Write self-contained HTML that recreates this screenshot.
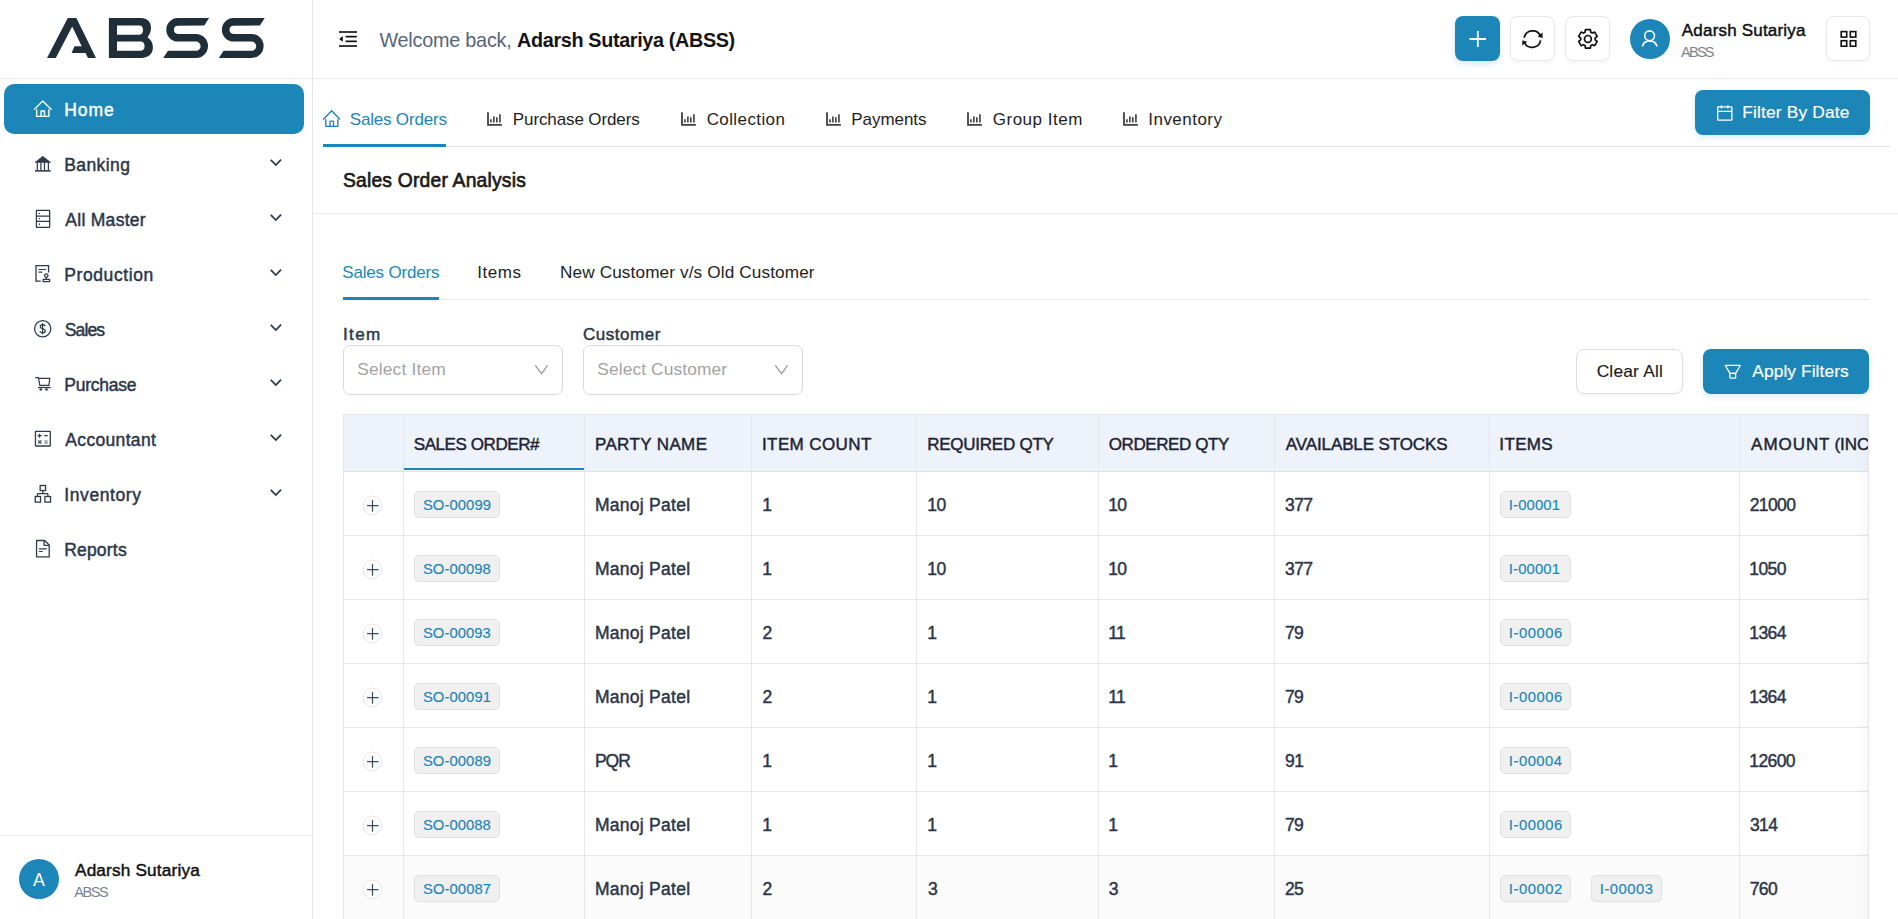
<!DOCTYPE html>
<html><head><meta charset="utf-8"><title>ABSS</title>
<style>
html,body{margin:0;padding:0;width:1898px;height:919px;overflow:hidden;background:#fff;}
body{position:relative;font-family:"Liberation Sans",sans-serif;}
.a{position:absolute;}
.t{position:absolute;line-height:1;white-space:nowrap;}
svg.a{overflow:visible;}
</style></head><body>
<div class="a" style="left:312px;top:0px;width:1px;height:919px;background:#e4e6ec"></div>
<div class="a" style="left:0px;top:78px;width:312px;height:1px;background:#e6e8ee"></div>
<svg class="a" style="left:0;top:0" width="312" height="78" viewBox="0 0 312 78">
<g fill="#1f2e38">
<path d="M47,57.9 L67.8,18.1 L76.4,18.1 L96,57.9 L88,57.9 L85.5,52.9 L71.6,52.9 L74.5,46.2 L81.7,46.2 L72.2,26.6 L55.8,57.9 Z"/>
<path fill-rule="evenodd" d="M108.9,18.1 L141,18.1 C147.5,18.1 151,22.5 151,27.5 C151,31.5 149.5,35 147.5,37.2 C151,39.5 152.9,43 152.9,47.5 C152.9,53.5 148.5,57.9 141.5,57.9 L108.9,57.9 Z M117,25.5 L139.5,25.5 C142,25.5 143,27.5 143,30.1 C143,32.6 142,34.7 139.5,34.7 L117,34.7 Z M117,41.6 L140.5,41.6 C143,41.6 144.6,43.5 144.6,46.2 C144.6,49 143,50.8 140.5,50.8 L117,50.8 Z"/>
<path d="M209.1,18.1 L178,18.1 A11.75,11.75 0 0 0 178,41.6 L196,41.6 A4.6,4.6 0 0 1 196,50.8 L168,50.8 L163.2,57.9 L196,57.9 A12,12 0 0 0 196,33.9 L178,33.9 A4.05,4.05 0 0 1 178,25.8 L204.3,25.5 Z"/>
<path transform="translate(55.6,0)" d="M209.1,18.1 L178,18.1 A11.75,11.75 0 0 0 178,41.6 L196,41.6 A4.6,4.6 0 0 1 196,50.8 L168,50.8 L163.2,57.9 L196,57.9 A12,12 0 0 0 196,33.9 L178,33.9 A4.05,4.05 0 0 1 178,25.8 L204.3,25.5 Z"/>
</g></svg>
<div class="a" style="left:4px;top:84px;width:300px;height:50px;background:#1b86b7;border-radius:10px"></div>
<svg class="a" style="left:28px;top:95px" width="30" height="30" viewBox="0 0 919 919"><g fill="none" stroke="#fff" stroke-width="42" stroke-linejoin="round" stroke-linecap="round"><path d="M195,440 L450,185 L710,440"/><path d="M265,450 L265,655 L640,655 L640,450"/><path d="M400,655 L400,490 L505,490 L505,655"/></g></svg>
<span class="t" style="left:64.20px;top:101.99px;font-size:17.5px;color:#fff;font-weight:400;letter-spacing:0.950px;-webkit-text-stroke:0.45px #fff;">Home</span>
<svg class="a" style="left:28px;top:150px" width="30" height="30" viewBox="0 0 919 919"><g fill="#2f3b4d" stroke="#2f3b4d"><path d="M215,380 L450,190 L695,380 Z" stroke-width="20" stroke-linejoin="round"/><g stroke-width="38" fill="none"><path d="M285,380 L285,620 M395,380 L395,620 M505,380 L505,620 M625,380 L625,620"/><path d="M215,640 L695,640" stroke-width="48"/></g></g></svg>
<span class="t" style="left:64.20px;top:156.99px;font-size:17.5px;color:#2b3648;font-weight:400;letter-spacing:0.429px;-webkit-text-stroke:0.45px #2b3648;">Banking</span>
<svg class="a" style="left:260px;top:150px" width="30" height="30" viewBox="0 0 919 919"><path d="M330,305 L485,460 L645,295" fill="none" stroke="#2f3b4d" stroke-width="55"/></svg>
<svg class="a" style="left:28px;top:205px" width="30" height="30" viewBox="0 0 919 919"><g fill="none" stroke="#2f3b4d" stroke-width="40"><rect x="258" y="165" width="405" height="520" rx="18"/><path d="M258,340 L663,340 M258,500 L663,500"/></g><g fill="#2f3b4d"><circle cx="350" cy="260" r="22"/><circle cx="350" cy="420" r="22"/><rect x="332" y="560" width="36" height="50" rx="16"/></g></svg>
<span class="t" style="left:65.30px;top:211.99px;font-size:17.5px;color:#2b3648;font-weight:400;letter-spacing:0.285px;-webkit-text-stroke:0.45px #2b3648;">All Master</span>
<svg class="a" style="left:260px;top:205px" width="30" height="30" viewBox="0 0 919 919"><path d="M330,305 L485,460 L645,295" fill="none" stroke="#2f3b4d" stroke-width="55"/></svg>
<svg class="a" style="left:28px;top:260px" width="30" height="30" viewBox="0 0 919 919"><g fill="none" stroke="#2f3b4d" stroke-width="40"><path d="M390,650 L245,650 L245,175 L630,175 L630,380"/><path d="M320,290 L550,290 M320,370 L440,370" stroke-width="36"/><circle cx="560" cy="478" r="52"/><path d="M560,530 L560,590"/><rect x="462" y="595" width="200" height="68" rx="10"/></g></svg>
<span class="t" style="left:64.20px;top:266.99px;font-size:17.5px;color:#2b3648;font-weight:400;letter-spacing:0.599px;-webkit-text-stroke:0.45px #2b3648;">Production</span>
<svg class="a" style="left:260px;top:260px" width="30" height="30" viewBox="0 0 919 919"><path d="M330,305 L485,460 L645,295" fill="none" stroke="#2f3b4d" stroke-width="55"/></svg>
<svg class="a" style="left:28px;top:315px" width="30" height="30" viewBox="0 0 919 919"><g fill="none" stroke="#2f3b4d" stroke-width="40"><circle cx="450" cy="420" r="248"/><path d="M525,335 C505,305 478,298 447,298 C405,298 375,322 375,357 C375,400 420,410 450,420 C492,432 530,447 530,490 C530,525 495,545 450,545 C410,545 380,530 360,498" stroke-width="40"/><path d="M447,255 L447,590" stroke-width="36"/></g></svg>
<span class="t" style="left:64.81px;top:321.99px;font-size:17.5px;color:#2b3648;font-weight:400;letter-spacing:-0.863px;-webkit-text-stroke:0.45px #2b3648;">Sales</span>
<svg class="a" style="left:260px;top:315px" width="30" height="30" viewBox="0 0 919 919"><path d="M330,305 L485,460 L645,295" fill="none" stroke="#2f3b4d" stroke-width="55"/></svg>
<svg class="a" style="left:28px;top:370px" width="30" height="30" viewBox="0 0 919 919"><g fill="none" stroke="#2f3b4d" stroke-width="38" stroke-linejoin="round"><path d="M220,235 L318,235 L362,470 L640,470 L668,258 L330,258"/><path d="M308,537 L692,537" stroke-width="40"/></g><g fill="#2f3b4d"><circle cx="392" cy="598" r="40"/><circle cx="567" cy="598" r="40"/></g></svg>
<span class="t" style="left:64.20px;top:376.99px;font-size:17.5px;color:#2b3648;font-weight:400;letter-spacing:-0.221px;-webkit-text-stroke:0.45px #2b3648;">Purchase</span>
<svg class="a" style="left:260px;top:370px" width="30" height="30" viewBox="0 0 919 919"><path d="M330,305 L485,460 L645,295" fill="none" stroke="#2f3b4d" stroke-width="55"/></svg>
<svg class="a" style="left:28px;top:425px" width="30" height="30" viewBox="0 0 919 919"><g fill="none" stroke="#2f3b4d" stroke-width="40"><rect x="228" y="198" width="455" height="445" rx="12"/><path d="M290,325 L420,325 M352,268 L352,388 M500,325 L605,325" stroke-width="36"/><path d="M312,470 L412,572 M412,470 L312,572" stroke-width="34"/><path d="M500,490 L605,490 M500,548 L605,548" stroke-width="34" stroke="#6b7482"/></g></svg>
<span class="t" style="left:65.30px;top:431.99px;font-size:17.5px;color:#2b3648;font-weight:400;letter-spacing:0.332px;-webkit-text-stroke:0.45px #2b3648;">Accountant</span>
<svg class="a" style="left:260px;top:425px" width="30" height="30" viewBox="0 0 919 919"><path d="M330,305 L485,460 L645,295" fill="none" stroke="#2f3b4d" stroke-width="55"/></svg>
<svg class="a" style="left:28px;top:480px" width="30" height="30" viewBox="0 0 919 919"><g fill="none" stroke="#2f3b4d" stroke-width="40"><rect x="373" y="168" width="165" height="155"/><path d="M455,323 L455,415 M290,415 L608,415 M290,415 L290,505 M608,415 L608,505"/><rect x="222" y="505" width="162" height="172"/><rect x="518" y="505" width="172" height="172"/></g></svg>
<span class="t" style="left:64.32px;top:486.99px;font-size:17.5px;color:#2b3648;font-weight:400;letter-spacing:0.583px;-webkit-text-stroke:0.45px #2b3648;">Inventory</span>
<svg class="a" style="left:260px;top:480px" width="30" height="30" viewBox="0 0 919 919"><path d="M330,305 L485,460 L645,295" fill="none" stroke="#2f3b4d" stroke-width="55"/></svg>
<svg class="a" style="left:28px;top:535px" width="30" height="30" viewBox="0 0 919 919"><g fill="none" stroke="#2f3b4d" stroke-width="40" stroke-linejoin="round"><path d="M262,168 L508,168 L650,305 L650,668 L262,668 Z"/><path d="M492,172 L492,315 L645,315"/><path d="M335,425 L575,425 M335,505 L455,505" stroke-width="36"/></g></svg>
<span class="t" style="left:64.20px;top:541.99px;font-size:17.5px;color:#2b3648;font-weight:400;letter-spacing:0.194px;-webkit-text-stroke:0.45px #2b3648;">Reports</span>
<div class="a" style="left:0px;top:835px;width:312px;height:1px;background:#e6e8ee"></div>
<div class="a" style="left:19px;top:859px;width:40px;height:40px;background:#1b86b7;border-radius:50%"></div>
<span class="t" style="left:32.90px;top:871.53px;font-size:17.8px;color:#fff;font-weight:400;">A</span>
<span class="t" style="left:75.00px;top:862.04px;font-size:17.2px;color:#111;font-weight:400;letter-spacing:0.173px;-webkit-text-stroke:0.45px #111;">Adarsh Sutariya</span>
<span class="t" style="left:74.20px;top:884.93px;font-size:14.5px;color:#7b8594;font-weight:400;letter-spacing:-1.430px;">ABSS</span>
<div class="a" style="left:313px;top:78px;width:1585px;height:1px;background:#e6e8ee"></div>
<svg class="a" style="left:336px;top:28px" width="24" height="22" viewBox="0 0 24 22"><g fill="#3a3a3a"><rect x="3" y="3" width="18" height="2"/><rect x="3" y="17" width="18" height="2"/></g><g fill="#111"><rect x="9.6" y="7.8" width="11.2" height="1.7"/><rect x="9.6" y="12.5" width="11.2" height="1.7"/><path d="M3.1,10.9 L6.8,8.0 L6.8,13.8 Z"/></g></svg>
<span class="t" style="left:379.40px;top:30.64px;font-size:19.8px;color:#56657a;font-weight:400;letter-spacing:-0.205px;">Welcome back,</span>
<span class="t" style="left:517.11px;top:30.64px;font-size:19.8px;color:#141414;font-weight:700;letter-spacing:-0.345px;">Adarsh Sutariya (ABSS)</span>
<div class="a" style="left:1455px;top:16px;width:45px;height:45px;background:#1b86b7;border-radius:8px;box-shadow:0 3px 6px rgba(27,134,183,0.18)"></div>
<svg class="a" style="left:1455px;top:16px" width="45" height="45" viewBox="0 0 45 45"><path d="M14.5,23 L31,23 M22.8,15 L22.8,31" stroke="#fff" stroke-width="1.8"/></svg>
<div class="a" style="left:1510px;top:16px;width:44.5px;height:45px;background:#fff;border:1px solid #e8e8e8;box-sizing:border-box;border-radius:8px;box-shadow:0 2px 4px rgba(0,0,0,0.04)"></div>
<div class="a" style="left:1565px;top:16px;width:44.5px;height:45px;background:#fff;border:1px solid #e8e8e8;box-sizing:border-box;border-radius:8px;box-shadow:0 2px 4px rgba(0,0,0,0.04)"></div>
<div class="a" style="left:1825.5px;top:16px;width:44.5px;height:45px;background:#fff;border:1px solid #e8e8e8;box-sizing:border-box;border-radius:8px;box-shadow:0 2px 4px rgba(0,0,0,0.04)"></div>
<svg class="a" style="left:1510px;top:16px" width="44" height="45" viewBox="0 0 44 45"><g fill="none" stroke="#111" stroke-width="1.7"><path d="M30.6,20.2 A8.6,8.6 0 0 0 14.2,21.8"/><path d="M14.2,26.0 A8.6,8.6 0 0 0 30.6,24.4"/></g><path d="M32.5,16.6 L32.6,22 L27.6,20.6 Z M12.2,29.6 L12.4,24.2 L17.2,25.8 Z" fill="#111"/></svg>
<svg class="a" style="left:1565px;top:16px" width="44" height="45" viewBox="0 0 44 45"><g fill="none" stroke="#111" stroke-width="1.7" stroke-linejoin="round"><path d="M20.06,16.18 L20.43,13.62 L25.37,13.62 L25.74,16.18 L27.30,17.08 L29.70,16.12 L32.17,20.40 L30.14,22.00 L30.14,23.80 L32.17,25.40 L29.70,29.68 L27.30,28.72 L25.74,29.62 L25.37,32.18 L20.43,32.18 L20.06,29.62 L18.50,28.72 L16.10,29.68 L13.63,25.40 L15.66,23.80 L15.66,22.00 L13.63,20.40 L16.10,16.12 L18.50,17.08 Z"/><circle cx="22.9" cy="22.9" r="3.4"/></g></svg>
<div class="a" style="left:1630px;top:19px;width:40px;height:40px;background:#1b86b7;border-radius:50%"></div>
<svg class="a" style="left:1630px;top:19px" width="40" height="40" viewBox="0 0 40 40"><g fill="none" stroke="#fff" stroke-width="1.6"><circle cx="19.6" cy="16.8" r="4.9"/><path d="M12.3,27.5 A7.6,7.6 0 0 1 27,27.5"/></g></svg>
<span class="t" style="left:1681.80px;top:22.41px;font-size:17px;color:#111;font-weight:400;letter-spacing:0.196px;-webkit-text-stroke:0.45px #111;">Adarsh Sutariya</span>
<span class="t" style="left:1681.00px;top:45.03px;font-size:14.5px;color:#7b8594;font-weight:400;letter-spacing:-1.730px;">ABSS</span>
<svg class="a" style="left:1825.5px;top:16px" width="44" height="45" viewBox="0 0 44 45"><g fill="none" stroke="#111" stroke-width="1.6"><rect x="15.2" y="15.6" width="5.5" height="5.5"/><rect x="24.3" y="15.6" width="5.5" height="5.5"/><rect x="15.2" y="24.7" width="5.5" height="5.5"/><rect x="24.3" y="24.7" width="5.5" height="5.5"/></g></svg>
<div class="a" style="left:323px;top:146px;width:1567px;height:1px;background:#e3e5ea"></div>
<div class="a" style="left:323px;top:144px;width:123px;height:3px;background:#1b86b7"></div>
<svg class="a" style="left:315px;top:103px" width="30" height="30" viewBox="0 0 919 919"><g fill="none" stroke="#1b86b7" stroke-width="42" stroke-linejoin="round" stroke-linecap="round"><path d="M260,500 L510,240 L755,490"/><path d="M330,510 L330,715 L700,715 L700,510"/><path d="M460,715 L460,555 L565,555 L565,715"/></g></svg>
<span class="t" style="left:349.74px;top:110.61px;font-size:17px;color:#1b86b7;font-weight:400;letter-spacing:-0.185px;">Sales Orders</span>
<svg class="a" style="left:480px;top:103px" width="30" height="30" viewBox="0 0 919 919"><g fill="none" stroke="#404040"><path d="M245,285 L245,670 L670,670" stroke-width="55"/><path d="M335,500 L335,600 M425,410 L425,600 M515,440 L515,600 M610,345 L610,600" stroke-width="50"/></g></svg>
<span class="t" style="left:512.84px;top:110.61px;font-size:17px;color:#1e1e1e;font-weight:400;letter-spacing:-0.112px;">Purchase Orders</span>
<svg class="a" style="left:674px;top:103px" width="30" height="30" viewBox="0 0 919 919"><g fill="none" stroke="#404040"><path d="M245,285 L245,670 L670,670" stroke-width="55"/><path d="M335,500 L335,600 M425,410 L425,600 M515,440 L515,600 M610,345 L610,600" stroke-width="50"/></g></svg>
<span class="t" style="left:706.65px;top:110.61px;font-size:17px;color:#1e1e1e;font-weight:400;letter-spacing:0.403px;">Collection</span>
<svg class="a" style="left:818.6px;top:103px" width="30" height="30" viewBox="0 0 919 919"><g fill="none" stroke="#404040"><path d="M245,285 L245,670 L670,670" stroke-width="55"/><path d="M335,500 L335,600 M425,410 L425,600 M515,440 L515,600 M610,345 L610,600" stroke-width="50"/></g></svg>
<span class="t" style="left:851.34px;top:110.61px;font-size:17px;color:#1e1e1e;font-weight:400;letter-spacing:-0.059px;">Payments</span>
<svg class="a" style="left:959.8px;top:103px" width="30" height="30" viewBox="0 0 919 919"><g fill="none" stroke="#404040"><path d="M245,285 L245,670 L670,670" stroke-width="55"/><path d="M335,500 L335,600 M425,410 L425,600 M515,440 L515,600 M610,345 L610,600" stroke-width="50"/></g></svg>
<span class="t" style="left:992.75px;top:110.61px;font-size:17px;color:#1e1e1e;font-weight:400;letter-spacing:0.508px;">Group Item</span>
<svg class="a" style="left:1116px;top:103px" width="30" height="30" viewBox="0 0 919 919"><g fill="none" stroke="#404040"><path d="M245,285 L245,670 L670,670" stroke-width="55"/><path d="M335,500 L335,600 M425,410 L425,600 M515,440 L515,600 M610,345 L610,600" stroke-width="50"/></g></svg>
<span class="t" style="left:1148.27px;top:110.61px;font-size:17px;color:#1e1e1e;font-weight:400;letter-spacing:0.472px;">Inventory</span>
<div class="a" style="left:1695px;top:90px;width:175px;height:45px;background:#1b86b7;border-radius:8px;box-shadow:0 3px 6px rgba(27,134,183,0.15)"></div>
<svg class="a" style="left:1710px;top:97px" width="30" height="30" viewBox="0 0 919 919"><g fill="none" stroke="#fff" stroke-width="40"><rect x="235" y="300" width="435" height="410" rx="14"/><path d="M235,440 L670,440 M350,250 L350,355 M550,250 L550,355"/></g></svg>
<span class="t" style="left:1742.21px;top:103.61px;font-size:17.35px;color:#fff;font-weight:400;letter-spacing:0.163px;-webkit-text-stroke:0.2px #fff;">Filter By Date</span>
<span class="t" style="left:342.93px;top:170.96px;font-size:19.3px;color:#1a1a1a;font-weight:400;letter-spacing:0.207px;-webkit-text-stroke:0.45px #1a1a1a;-webkit-text-stroke:0.65px #1a1a1a;">Sales Order Analysis</span>
<div class="a" style="left:313px;top:213px;width:1585px;height:1px;background:#e6ebf1"></div>
<span class="t" style="left:342.24px;top:263.71px;font-size:17px;color:#1b86b7;font-weight:400;letter-spacing:-0.167px;">Sales Orders</span>
<span class="t" style="left:477.17px;top:263.71px;font-size:17px;color:#1e1e1e;font-weight:400;letter-spacing:0.590px;">Items</span>
<span class="t" style="left:560.02px;top:263.54px;font-size:17.2px;color:#1e1e1e;font-weight:400;letter-spacing:0.119px;">New Customer v/s Old Customer</span>
<div class="a" style="left:343px;top:299px;width:1526px;height:1px;background:#e6e8ee"></div>
<div class="a" style="left:343px;top:297px;width:96px;height:3px;background:#1b86b7"></div>
<span class="t" style="left:342.97px;top:326.41px;font-size:17px;color:#2b3648;font-weight:400;letter-spacing:1.357px;-webkit-text-stroke:0.45px #2b3648;">Item</span>
<span class="t" style="left:582.95px;top:326.41px;font-size:17px;color:#2b3648;font-weight:400;letter-spacing:0.528px;-webkit-text-stroke:0.45px #2b3648;">Customer</span>
<div class="a" style="left:343px;top:345px;width:220px;height:50px;border:1px solid #d9d9d9;box-sizing:border-box;border-radius:7px;background:#fff"></div>
<span class="t" style="left:357.22px;top:361.21px;font-size:17.35px;color:#a3a3a3;font-weight:400;letter-spacing:0.167px;">Select Item</span>
<svg class="a" style="left:526px;top:355px" width="30" height="30" viewBox="0 0 919 919"><path d="M285,315 L475,570 L660,315" fill="none" stroke="#999" stroke-width="38"/></svg>
<div class="a" style="left:583px;top:345px;width:220px;height:50px;border:1px solid #d9d9d9;box-sizing:border-box;border-radius:7px;background:#fff"></div>
<span class="t" style="left:597.22px;top:361.21px;font-size:17.35px;color:#a3a3a3;font-weight:400;letter-spacing:0.123px;">Select Customer</span>
<svg class="a" style="left:766px;top:355px" width="30" height="30" viewBox="0 0 919 919"><path d="M285,315 L475,570 L660,315" fill="none" stroke="#999" stroke-width="38"/></svg>
<div class="a" style="left:1576px;top:349px;width:107px;height:45px;background:#fff;border:1px solid #dedede;box-sizing:border-box;border-radius:8px;box-shadow:0 2px 3px rgba(0,0,0,0.03)"></div>
<span class="t" style="left:1596.63px;top:363.01px;font-size:17.35px;color:#1a1a1a;font-weight:400;letter-spacing:0.207px;-webkit-text-stroke:0.15px #1a1a1a;">Clear All</span>
<div class="a" style="left:1703px;top:349px;width:166px;height:45px;background:#1b86b7;border-radius:8px;box-shadow:0 3px 6px rgba(27,134,183,0.15)"></div>
<svg class="a" style="left:1718px;top:356px" width="30" height="30" viewBox="0 0 919 919"><g fill="none" stroke="#fff" stroke-width="40" stroke-linejoin="round"><path d="M225,290 L685,290 L540,530 L365,530 Z"/><rect x="365" y="530" width="175" height="150" rx="12"/></g></svg>
<span class="t" style="left:1752.30px;top:363.01px;font-size:17.35px;color:#fff;font-weight:400;letter-spacing:0.082px;-webkit-text-stroke:0.2px #fff;">Apply Filters</span>
<div class="a" style="left:343px;top:414px;width:1526px;height:505px;border:1px solid #e3e6ec;border-bottom:none;box-sizing:border-box"></div>
<div class="a" style="left:344px;top:415px;width:1524px;height:56px;background:#eef3fb"></div>
<div class="a" style="left:344px;top:471px;width:1524px;height:1px;background:#e0e3e9"></div>
<div class="a" style="left:344px;top:855px;width:1524px;height:64px;background:#fbfbfb"></div>
<div class="a" style="left:403px;top:415px;width:1px;height:504px;background:#e5e7ec"></div>
<div class="a" style="left:584px;top:415px;width:1px;height:504px;background:#e5e7ec"></div>
<div class="a" style="left:751px;top:415px;width:1px;height:504px;background:#e5e7ec"></div>
<div class="a" style="left:916px;top:415px;width:1px;height:504px;background:#e5e7ec"></div>
<div class="a" style="left:1098px;top:415px;width:1px;height:504px;background:#e5e7ec"></div>
<div class="a" style="left:1274px;top:415px;width:1px;height:504px;background:#e5e7ec"></div>
<div class="a" style="left:1489px;top:415px;width:1px;height:504px;background:#e5e7ec"></div>
<div class="a" style="left:1739px;top:415px;width:1px;height:504px;background:#e5e7ec"></div>
<div class="a" style="left:404px;top:468px;width:180px;height:2px;background:#1b86b7"></div>
<span class="t" style="left:413.74px;top:435.91px;font-size:17.0px;color:#1d2433;font-weight:400;letter-spacing:-0.422px;-webkit-text-stroke:0.45px #1d2433;">SALES ORDER#</span>
<span class="t" style="left:594.94px;top:435.91px;font-size:17.0px;color:#1d2433;font-weight:400;letter-spacing:0.379px;-webkit-text-stroke:0.45px #1d2433;">PARTY NAME</span>
<span class="t" style="left:761.97px;top:435.91px;font-size:17.0px;color:#1d2433;font-weight:400;letter-spacing:0.403px;-webkit-text-stroke:0.45px #1d2433;">ITEM COUNT</span>
<span class="t" style="left:927.24px;top:435.91px;font-size:17.0px;color:#1d2433;font-weight:400;letter-spacing:-0.252px;-webkit-text-stroke:0.45px #1d2433;">REQUIRED QTY</span>
<span class="t" style="left:1108.73px;top:435.91px;font-size:17.0px;color:#1d2433;font-weight:400;letter-spacing:-0.400px;-webkit-text-stroke:0.45px #1d2433;">ORDERED QTY</span>
<span class="t" style="left:1285.80px;top:435.91px;font-size:17.0px;color:#1d2433;font-weight:400;letter-spacing:-0.113px;-webkit-text-stroke:0.45px #1d2433;">AVAILABLE STOCKS</span>
<span class="t" style="left:1499.37px;top:435.91px;font-size:17.0px;color:#1d2433;font-weight:400;letter-spacing:0.340px;-webkit-text-stroke:0.45px #1d2433;">ITEMS</span>
<span class="t" style="left:1751.10px;top:435.91px;font-size:17.0px;color:#1d2433;font-weight:400;letter-spacing:0.946px;-webkit-text-stroke:0.45px #1d2433;">AMOUNT</span>
<span class="t" style="left:1834.38px;top:435.91px;font-size:17.0px;color:#1d2433;font-weight:400;-webkit-text-stroke:0.45px #1d2433;">(INCL. TAX)</span>
<div class="a" style="left:344px;top:535px;width:1524px;height:1px;background:#e5e7ec"></div>
<svg class="a" style="left:357px;top:490px" width="30" height="30" viewBox="0 0 919 919"><circle cx="470" cy="470" r="285" fill="#fff" stroke="#e2e2e2" stroke-width="28"/><path d="M310,480 L660,480 M475,310 L475,665" stroke="#3a4a5e" stroke-width="38"/></svg>
<div class="a" style="left:414px;top:491px;width:86px;height:27px;background:#f0f0f0;border:1px solid #e0e0e0;box-sizing:border-box;border-radius:5px"></div>
<span class="t" style="left:422.93px;top:497.77px;font-size:14.8px;color:#1b86b7;font-weight:400;letter-spacing:0.078px;-webkit-text-stroke:0.45px #1b86b7;-webkit-text-stroke:0.15px #1b86b7;">SO-00099</span>
<span class="t" style="left:594.90px;top:497.29px;font-size:17.5px;color:#2b3648;font-weight:400;letter-spacing:0.284px;-webkit-text-stroke:0.45px #2b3648;">Manoj Patel</span>
<span class="t" style="left:762.19px;top:497.29px;font-size:17.5px;color:#2b3648;font-weight:400;-webkit-text-stroke:0.45px #2b3648;letter-spacing:-0.6px;">1</span>
<span class="t" style="left:927.29px;top:497.29px;font-size:17.5px;color:#2b3648;font-weight:400;-webkit-text-stroke:0.45px #2b3648;letter-spacing:-0.6px;">10</span>
<span class="t" style="left:1108.19px;top:497.29px;font-size:17.5px;color:#2b3648;font-weight:400;-webkit-text-stroke:0.45px #2b3648;letter-spacing:-0.6px;">10</span>
<span class="t" style="left:1285.10px;top:497.29px;font-size:17.5px;color:#2b3648;font-weight:400;-webkit-text-stroke:0.45px #2b3648;letter-spacing:-0.6px;">377</span>
<span class="t" style="left:1749.72px;top:497.29px;font-size:17.5px;color:#2b3648;font-weight:400;-webkit-text-stroke:0.45px #2b3648;letter-spacing:-0.6px;">21000</span>
<div class="a" style="left:1500.3px;top:491px;width:70.40000000000009px;height:27px;background:#f0f0f0;border:1px solid #e0e0e0;box-sizing:border-box;border-radius:5px"></div>
<span class="t" style="left:1508.87px;top:497.77px;font-size:14.8px;color:#1b86b7;font-weight:400;letter-spacing:0.154px;-webkit-text-stroke:0.45px #1b86b7;-webkit-text-stroke:0.15px #1b86b7;">I-00001</span>
<div class="a" style="left:344px;top:599px;width:1524px;height:1px;background:#e5e7ec"></div>
<svg class="a" style="left:357px;top:554px" width="30" height="30" viewBox="0 0 919 919"><circle cx="470" cy="470" r="285" fill="#fff" stroke="#e2e2e2" stroke-width="28"/><path d="M310,480 L660,480 M475,310 L475,665" stroke="#3a4a5e" stroke-width="38"/></svg>
<div class="a" style="left:414px;top:555px;width:86px;height:27px;background:#f0f0f0;border:1px solid #e0e0e0;box-sizing:border-box;border-radius:5px"></div>
<span class="t" style="left:422.93px;top:561.77px;font-size:14.8px;color:#1b86b7;font-weight:400;letter-spacing:0.067px;-webkit-text-stroke:0.45px #1b86b7;-webkit-text-stroke:0.15px #1b86b7;">SO-00098</span>
<span class="t" style="left:594.90px;top:561.29px;font-size:17.5px;color:#2b3648;font-weight:400;letter-spacing:0.284px;-webkit-text-stroke:0.45px #2b3648;">Manoj Patel</span>
<span class="t" style="left:762.19px;top:561.29px;font-size:17.5px;color:#2b3648;font-weight:400;-webkit-text-stroke:0.45px #2b3648;letter-spacing:-0.6px;">1</span>
<span class="t" style="left:927.29px;top:561.29px;font-size:17.5px;color:#2b3648;font-weight:400;-webkit-text-stroke:0.45px #2b3648;letter-spacing:-0.6px;">10</span>
<span class="t" style="left:1108.19px;top:561.29px;font-size:17.5px;color:#2b3648;font-weight:400;-webkit-text-stroke:0.45px #2b3648;letter-spacing:-0.6px;">10</span>
<span class="t" style="left:1285.10px;top:561.29px;font-size:17.5px;color:#2b3648;font-weight:400;-webkit-text-stroke:0.45px #2b3648;letter-spacing:-0.6px;">377</span>
<span class="t" style="left:1749.29px;top:561.29px;font-size:17.5px;color:#2b3648;font-weight:400;-webkit-text-stroke:0.45px #2b3648;letter-spacing:-0.6px;">1050</span>
<div class="a" style="left:1500.3px;top:555px;width:70.40000000000009px;height:27px;background:#f0f0f0;border:1px solid #e0e0e0;box-sizing:border-box;border-radius:5px"></div>
<span class="t" style="left:1508.87px;top:561.77px;font-size:14.8px;color:#1b86b7;font-weight:400;letter-spacing:0.154px;-webkit-text-stroke:0.45px #1b86b7;-webkit-text-stroke:0.15px #1b86b7;">I-00001</span>
<div class="a" style="left:344px;top:663px;width:1524px;height:1px;background:#e5e7ec"></div>
<svg class="a" style="left:357px;top:618px" width="30" height="30" viewBox="0 0 919 919"><circle cx="470" cy="470" r="285" fill="#fff" stroke="#e2e2e2" stroke-width="28"/><path d="M310,480 L660,480 M475,310 L475,665" stroke="#3a4a5e" stroke-width="38"/></svg>
<div class="a" style="left:414px;top:619px;width:86px;height:27px;background:#f0f0f0;border:1px solid #e0e0e0;box-sizing:border-box;border-radius:5px"></div>
<span class="t" style="left:422.93px;top:625.77px;font-size:14.8px;color:#1b86b7;font-weight:400;letter-spacing:0.067px;-webkit-text-stroke:0.45px #1b86b7;-webkit-text-stroke:0.15px #1b86b7;">SO-00093</span>
<span class="t" style="left:594.90px;top:625.29px;font-size:17.5px;color:#2b3648;font-weight:400;letter-spacing:0.284px;-webkit-text-stroke:0.45px #2b3648;">Manoj Patel</span>
<span class="t" style="left:762.62px;top:625.29px;font-size:17.5px;color:#2b3648;font-weight:400;-webkit-text-stroke:0.45px #2b3648;letter-spacing:-0.6px;">2</span>
<span class="t" style="left:927.29px;top:625.29px;font-size:17.5px;color:#2b3648;font-weight:400;-webkit-text-stroke:0.45px #2b3648;letter-spacing:-0.6px;">1</span>
<span class="t" style="left:1108.19px;top:625.29px;font-size:17.5px;color:#2b3648;font-weight:400;-webkit-text-stroke:0.45px #2b3648;letter-spacing:-0.6px;">11</span>
<span class="t" style="left:1284.92px;top:625.29px;font-size:17.5px;color:#2b3648;font-weight:400;-webkit-text-stroke:0.45px #2b3648;letter-spacing:-0.6px;">79</span>
<span class="t" style="left:1749.29px;top:625.29px;font-size:17.5px;color:#2b3648;font-weight:400;-webkit-text-stroke:0.45px #2b3648;letter-spacing:-0.6px;">1364</span>
<div class="a" style="left:1500.3px;top:619px;width:70.40000000000009px;height:27px;background:#f0f0f0;border:1px solid #e0e0e0;box-sizing:border-box;border-radius:5px"></div>
<span class="t" style="left:1508.87px;top:625.77px;font-size:14.8px;color:#1b86b7;font-weight:400;letter-spacing:0.525px;-webkit-text-stroke:0.45px #1b86b7;-webkit-text-stroke:0.15px #1b86b7;">I-00006</span>
<div class="a" style="left:344px;top:727px;width:1524px;height:1px;background:#e5e7ec"></div>
<svg class="a" style="left:357px;top:682px" width="30" height="30" viewBox="0 0 919 919"><circle cx="470" cy="470" r="285" fill="#fff" stroke="#e2e2e2" stroke-width="28"/><path d="M310,480 L660,480 M475,310 L475,665" stroke="#3a4a5e" stroke-width="38"/></svg>
<div class="a" style="left:414px;top:683px;width:86px;height:27px;background:#f0f0f0;border:1px solid #e0e0e0;box-sizing:border-box;border-radius:5px"></div>
<span class="t" style="left:422.93px;top:689.77px;font-size:14.8px;color:#1b86b7;font-weight:400;letter-spacing:0.078px;-webkit-text-stroke:0.45px #1b86b7;-webkit-text-stroke:0.15px #1b86b7;">SO-00091</span>
<span class="t" style="left:594.90px;top:689.29px;font-size:17.5px;color:#2b3648;font-weight:400;letter-spacing:0.284px;-webkit-text-stroke:0.45px #2b3648;">Manoj Patel</span>
<span class="t" style="left:762.62px;top:689.29px;font-size:17.5px;color:#2b3648;font-weight:400;-webkit-text-stroke:0.45px #2b3648;letter-spacing:-0.6px;">2</span>
<span class="t" style="left:927.29px;top:689.29px;font-size:17.5px;color:#2b3648;font-weight:400;-webkit-text-stroke:0.45px #2b3648;letter-spacing:-0.6px;">1</span>
<span class="t" style="left:1108.19px;top:689.29px;font-size:17.5px;color:#2b3648;font-weight:400;-webkit-text-stroke:0.45px #2b3648;letter-spacing:-0.6px;">11</span>
<span class="t" style="left:1284.92px;top:689.29px;font-size:17.5px;color:#2b3648;font-weight:400;-webkit-text-stroke:0.45px #2b3648;letter-spacing:-0.6px;">79</span>
<span class="t" style="left:1749.29px;top:689.29px;font-size:17.5px;color:#2b3648;font-weight:400;-webkit-text-stroke:0.45px #2b3648;letter-spacing:-0.6px;">1364</span>
<div class="a" style="left:1500.3px;top:683px;width:70.40000000000009px;height:27px;background:#f0f0f0;border:1px solid #e0e0e0;box-sizing:border-box;border-radius:5px"></div>
<span class="t" style="left:1508.87px;top:689.77px;font-size:14.8px;color:#1b86b7;font-weight:400;letter-spacing:0.525px;-webkit-text-stroke:0.45px #1b86b7;-webkit-text-stroke:0.15px #1b86b7;">I-00006</span>
<div class="a" style="left:344px;top:791px;width:1524px;height:1px;background:#e5e7ec"></div>
<svg class="a" style="left:357px;top:746px" width="30" height="30" viewBox="0 0 919 919"><circle cx="470" cy="470" r="285" fill="#fff" stroke="#e2e2e2" stroke-width="28"/><path d="M310,480 L660,480 M475,310 L475,665" stroke="#3a4a5e" stroke-width="38"/></svg>
<div class="a" style="left:414px;top:747px;width:86px;height:27px;background:#f0f0f0;border:1px solid #e0e0e0;box-sizing:border-box;border-radius:5px"></div>
<span class="t" style="left:422.93px;top:753.77px;font-size:14.8px;color:#1b86b7;font-weight:400;letter-spacing:0.078px;-webkit-text-stroke:0.45px #1b86b7;-webkit-text-stroke:0.15px #1b86b7;">SO-00089</span>
<span class="t" style="left:594.90px;top:753.29px;font-size:17.5px;color:#2b3648;font-weight:400;letter-spacing:-0.950px;-webkit-text-stroke:0.45px #2b3648;">PQR</span>
<span class="t" style="left:762.19px;top:753.29px;font-size:17.5px;color:#2b3648;font-weight:400;-webkit-text-stroke:0.45px #2b3648;letter-spacing:-0.6px;">1</span>
<span class="t" style="left:927.29px;top:753.29px;font-size:17.5px;color:#2b3648;font-weight:400;-webkit-text-stroke:0.45px #2b3648;letter-spacing:-0.6px;">1</span>
<span class="t" style="left:1108.19px;top:753.29px;font-size:17.5px;color:#2b3648;font-weight:400;-webkit-text-stroke:0.45px #2b3648;letter-spacing:-0.6px;">1</span>
<span class="t" style="left:1285.01px;top:753.29px;font-size:17.5px;color:#2b3648;font-weight:400;-webkit-text-stroke:0.45px #2b3648;letter-spacing:-0.6px;">91</span>
<span class="t" style="left:1749.29px;top:753.29px;font-size:17.5px;color:#2b3648;font-weight:400;-webkit-text-stroke:0.45px #2b3648;letter-spacing:-0.6px;">12600</span>
<div class="a" style="left:1500.3px;top:747px;width:70.40000000000009px;height:27px;background:#f0f0f0;border:1px solid #e0e0e0;box-sizing:border-box;border-radius:5px"></div>
<span class="t" style="left:1508.87px;top:753.77px;font-size:14.8px;color:#1b86b7;font-weight:400;letter-spacing:0.501px;-webkit-text-stroke:0.45px #1b86b7;-webkit-text-stroke:0.15px #1b86b7;">I-00004</span>
<div class="a" style="left:344px;top:855px;width:1524px;height:1px;background:#e5e7ec"></div>
<svg class="a" style="left:357px;top:810px" width="30" height="30" viewBox="0 0 919 919"><circle cx="470" cy="470" r="285" fill="#fff" stroke="#e2e2e2" stroke-width="28"/><path d="M310,480 L660,480 M475,310 L475,665" stroke="#3a4a5e" stroke-width="38"/></svg>
<div class="a" style="left:414px;top:811px;width:86px;height:27px;background:#f0f0f0;border:1px solid #e0e0e0;box-sizing:border-box;border-radius:5px"></div>
<span class="t" style="left:422.93px;top:817.77px;font-size:14.8px;color:#1b86b7;font-weight:400;letter-spacing:0.067px;-webkit-text-stroke:0.45px #1b86b7;-webkit-text-stroke:0.15px #1b86b7;">SO-00088</span>
<span class="t" style="left:594.90px;top:817.29px;font-size:17.5px;color:#2b3648;font-weight:400;letter-spacing:0.284px;-webkit-text-stroke:0.45px #2b3648;">Manoj Patel</span>
<span class="t" style="left:762.19px;top:817.29px;font-size:17.5px;color:#2b3648;font-weight:400;-webkit-text-stroke:0.45px #2b3648;letter-spacing:-0.6px;">1</span>
<span class="t" style="left:927.29px;top:817.29px;font-size:17.5px;color:#2b3648;font-weight:400;-webkit-text-stroke:0.45px #2b3648;letter-spacing:-0.6px;">1</span>
<span class="t" style="left:1108.19px;top:817.29px;font-size:17.5px;color:#2b3648;font-weight:400;-webkit-text-stroke:0.45px #2b3648;letter-spacing:-0.6px;">1</span>
<span class="t" style="left:1284.92px;top:817.29px;font-size:17.5px;color:#2b3648;font-weight:400;-webkit-text-stroke:0.45px #2b3648;letter-spacing:-0.6px;">79</span>
<span class="t" style="left:1749.90px;top:817.29px;font-size:17.5px;color:#2b3648;font-weight:400;-webkit-text-stroke:0.45px #2b3648;letter-spacing:-0.6px;">314</span>
<div class="a" style="left:1500.3px;top:811px;width:70.40000000000009px;height:27px;background:#f0f0f0;border:1px solid #e0e0e0;box-sizing:border-box;border-radius:5px"></div>
<span class="t" style="left:1508.87px;top:817.77px;font-size:14.8px;color:#1b86b7;font-weight:400;letter-spacing:0.525px;-webkit-text-stroke:0.45px #1b86b7;-webkit-text-stroke:0.15px #1b86b7;">I-00006</span>
<div class="a" style="left:344px;top:919px;width:1524px;height:1px;background:#e5e7ec"></div>
<svg class="a" style="left:357px;top:874px" width="30" height="30" viewBox="0 0 919 919"><circle cx="470" cy="470" r="285" fill="#fff" stroke="#e2e2e2" stroke-width="28"/><path d="M310,480 L660,480 M475,310 L475,665" stroke="#3a4a5e" stroke-width="38"/></svg>
<div class="a" style="left:414px;top:875px;width:86px;height:27px;background:#f0f0f0;border:1px solid #e0e0e0;box-sizing:border-box;border-radius:5px"></div>
<span class="t" style="left:422.93px;top:881.77px;font-size:14.8px;color:#1b86b7;font-weight:400;letter-spacing:0.088px;-webkit-text-stroke:0.45px #1b86b7;-webkit-text-stroke:0.15px #1b86b7;">SO-00087</span>
<span class="t" style="left:594.90px;top:881.29px;font-size:17.5px;color:#2b3648;font-weight:400;letter-spacing:0.284px;-webkit-text-stroke:0.45px #2b3648;">Manoj Patel</span>
<span class="t" style="left:762.62px;top:881.29px;font-size:17.5px;color:#2b3648;font-weight:400;-webkit-text-stroke:0.45px #2b3648;letter-spacing:-0.6px;">2</span>
<span class="t" style="left:927.90px;top:881.29px;font-size:17.5px;color:#2b3648;font-weight:400;-webkit-text-stroke:0.45px #2b3648;letter-spacing:-0.6px;">3</span>
<span class="t" style="left:1108.80px;top:881.29px;font-size:17.5px;color:#2b3648;font-weight:400;-webkit-text-stroke:0.45px #2b3648;letter-spacing:-0.6px;">3</span>
<span class="t" style="left:1284.92px;top:881.29px;font-size:17.5px;color:#2b3648;font-weight:400;-webkit-text-stroke:0.45px #2b3648;letter-spacing:-0.6px;">25</span>
<span class="t" style="left:1749.72px;top:881.29px;font-size:17.5px;color:#2b3648;font-weight:400;-webkit-text-stroke:0.45px #2b3648;letter-spacing:-0.6px;">760</span>
<div class="a" style="left:1500.3px;top:875px;width:70.40000000000009px;height:27px;background:#f0f0f0;border:1px solid #e0e0e0;box-sizing:border-box;border-radius:5px"></div>
<span class="t" style="left:1508.87px;top:881.77px;font-size:14.8px;color:#1b86b7;font-weight:400;letter-spacing:0.550px;-webkit-text-stroke:0.45px #1b86b7;-webkit-text-stroke:0.15px #1b86b7;">I-00002</span>
<div class="a" style="left:1591.2px;top:875px;width:70.40000000000009px;height:27px;background:#f0f0f0;border:1px solid #e0e0e0;box-sizing:border-box;border-radius:5px"></div>
<span class="t" style="left:1599.77px;top:881.77px;font-size:14.8px;color:#1b86b7;font-weight:400;letter-spacing:0.525px;-webkit-text-stroke:0.45px #1b86b7;-webkit-text-stroke:0.15px #1b86b7;">I-00003</span>
<div class="a" style="left:1869px;top:414px;width:29px;height:505px;background:#fff"></div>
<div class="a" style="left:1855px;top:415px;width:13px;height:504px;background:linear-gradient(to right, rgba(0,0,0,0), rgba(0,0,0,0.025))"></div>
<div class="a" style="left:1868px;top:414px;width:1px;height:505px;background:#e3e6ec"></div>
</body></html>
